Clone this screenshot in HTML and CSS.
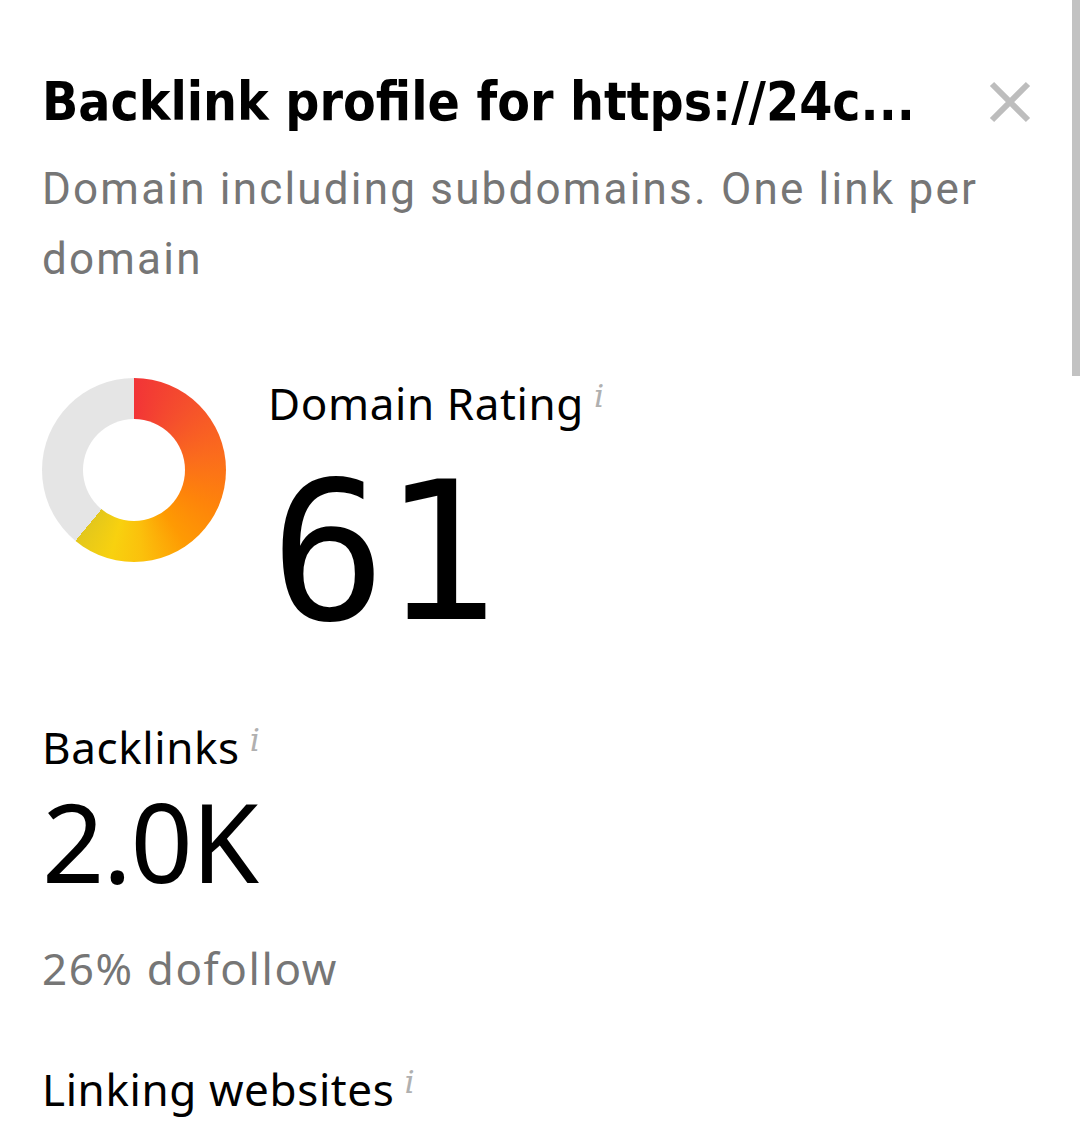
FILE: index.html
```html
<!DOCTYPE html>
<html>
<head>
<meta charset="utf-8">
<link rel="stylesheet" href="styles.css">
</head>
<body>
<div class="panel">
  <div class="header">
    <h1 class="title">Backlink profile for https://24c...</h1>
    <button class="close" aria-label="Close">
      <svg width="44" height="44" viewBox="0 0 44 44"><path d="M4 4L40 40M40 4L4 40" stroke="#bdbdbd" stroke-width="6" stroke-linecap="butt"/></svg>
    </button>
  </div>
  <p class="subtitle">Domain including subdomains. One link per domain</p>

  <div class="dr">
    <div class="donut"><div class="hole"></div></div>
    <div class="dr-text">
      <div class="label">Domain Rating<span class="info">i</span></div>
      <div class="dr-value">61</div>
    </div>
  </div>

  <div class="metric">
    <div class="label">Backlinks<span class="info">i</span></div>
    <div class="big">2.0K</div>
    <div class="note">26% dofollow</div>
  </div>

  <div class="metric">
    <div class="label">Linking websites<span class="info">i</span></div>
  </div>
</div>
<div class="scrollbar"></div>
</body>
</html>
```
FILE: styles.css
```css
html, body {
  margin: 0;
  padding: 0;
  background: #fff;
}
body {
  font-family: "Noto Sans", "Liberation Sans", sans-serif;
  color: #000;
  overflow: hidden;
}
.panel {
  padding: 66px 48px 0 42px;
}
.header {
  display: flex;
  align-items: center;
  justify-content: space-between;
}
.title {
  margin: 0;
  font-family: "DejaVu Sans Condensed", "DejaVu Sans", sans-serif;
  font-stretch: condensed;
  font-weight: bold;
  font-size: 53px;
  line-height: 72px;
  white-space: nowrap;
}
.close {
  border: 0;
  background: none;
  padding: 0;
  width: 44px;
  height: 44px;
  cursor: pointer;
}
.subtitle {
  margin: 16px 0 0;
  font-family: Roboto, "Liberation Sans", sans-serif;
  font-size: 44px;
  line-height: 70px;
  letter-spacing: 2.2px;
  color: #767676;
}
.dr {
  display: flex;
  align-items: flex-start;
  margin-top: 84px;
}
.donut {
  width: 184px;
  height: 184px;
  border-radius: 50%;
  background: conic-gradient(from 0deg, #f23437 0deg, #f5502c 40deg, #fb6c1c 80deg, #fe840a 115deg, #fe9a03 145deg, #fbc10c 175deg, #f8d10f 195deg, #e3c71c 219.6deg, #e5e5e5 219.6deg, #e5e5e5 360deg);
  display: flex;
  align-items: center;
  justify-content: center;
  flex: none;
}
.hole {
  width: 102px;
  height: 102px;
  border-radius: 50%;
  background: #fff;
}
.dr-text {
  margin-left: 42px;
}
.label {
  font-size: 44px;
  line-height: 60px;
  letter-spacing: 0.6px;
  color: #000;
}
.info {
  font-family: "DejaVu Serif", serif;
  font-style: italic;
  font-size: 32px;
  color: #b0b0b0;
  vertical-align: 13px;
  margin-left: 10px;
}
.dr-text .label {
  margin-top: -12px;
}
.dr-value {
  font-family: "DejaVu Sans Mono", monospace;
  font-size: 193px;
  line-height: 200px;
  letter-spacing: -4px;
  margin-left: 2px;
  margin-top: 20px;
}
.metric {
  margin-top: 57px;
}
.big {
  font-size: 109px;
  line-height: 120px;
  margin-top: 4px;
  letter-spacing: -1.5px;
}
.note {
  margin-top: 37px;
  font-size: 44px;
  line-height: 60px;
  letter-spacing: 1.6px;
  color: #767676;
}
.metric + .metric {
  margin-top: 54px;
}
.scrollbar {
  position: absolute;
  top: 0;
  right: 0;
  width: 8px;
  height: 376px;
  background: #c2c2c2;
}
```
